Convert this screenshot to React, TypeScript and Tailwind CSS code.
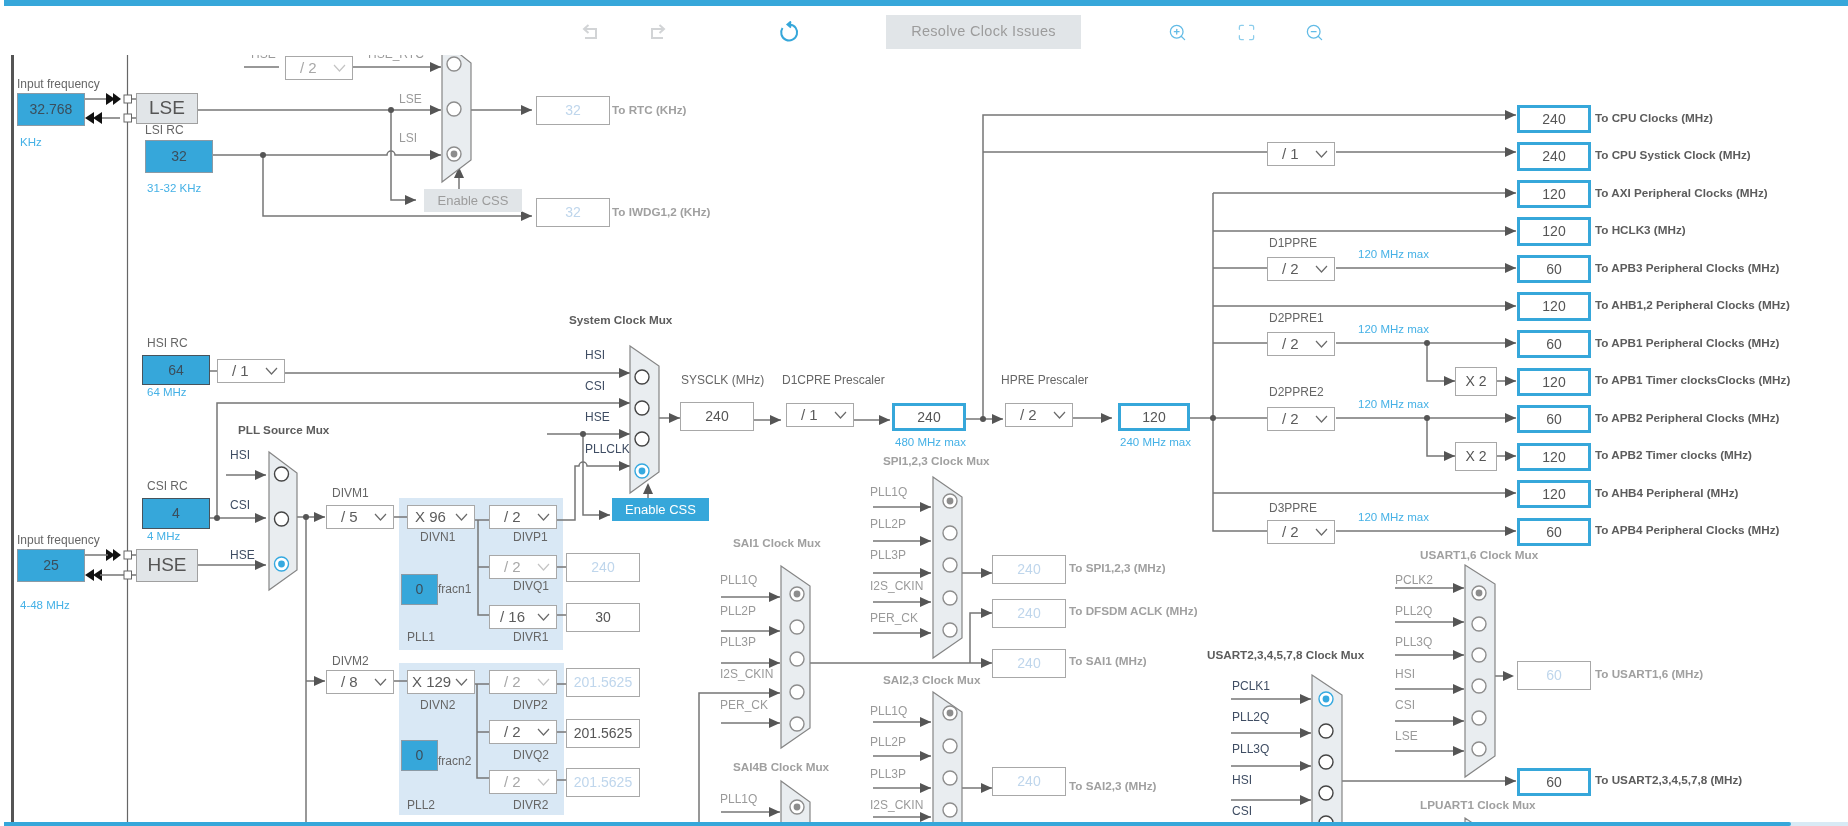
import { Maximize, ZoomIn, ZoomOut } from 'lucide-react';

// everything on the canvas uses page coordinates, the canvas itself starts at y=55
const TOP = 55;

const WIRE = '#767676';
const HEAD = '#555';

type Pt = [number, number];

const wires = [
  // LSE / LSI / RTC
  'M244 67H279', 'M353 67H441', 'M198 110H441', 'M213 155H387a4 4 0 0 1 8 0H441',
  'M391 110V200H416', 'M263 155V216H532', 'M471 110H532', 'M459 189V172',
  'M85 99H118', 'M100 118H120', 'M132 99H136', 'M132 118H136',
  // system clock mux inputs
  'M210 371H217', 'M285 373H630', 'M217 518V403H630', 'M547 434H630', 'M583 434V515H610',
  'M557 520H575V466H579a4 4 0 0 1 8 0H630', 'M648 498V486',
  // pll source mux
  'M226 475H266', 'M210 518H266', 'M198 565H266', 'M297 517H325', 'M306 517V826', 'M306 681H325',
  // pll1
  'M394 517H407', 'M475 520H489', 'M478 520V615H489', 'M478 567H489', 'M557 567H566', 'M557 615H566',
  // pll2
  'M394 681H407', 'M475 684H489', 'M477 684V778H489', 'M477 732H489', 'M557 684H566', 'M557 732H566', 'M557 780H566',
  // sysclk chain
  'M659 418H680', 'M754 420H781', 'M854 420H890', 'M966 419H1003', 'M983 419V115H1516',
  'M983 152H1267', 'M1336 152H1516', 'M1073 418H1112', 'M1190 418H1267',
  // right bus
  'M1213 193V531H1267', 'M1213 193H1516', 'M1213 231H1516', 'M1213 306H1516', 'M1213 493H1516',
  'M1213 268H1267', 'M1336 268H1516', 'M1213 343H1267', 'M1336 343H1516', 'M1336 418H1516', 'M1336 531H1516',
  'M1427 343V381H1455', 'M1497 381H1516', 'M1427 418V456H1455', 'M1497 456H1516',
  // sai1
  'M721 597H780', 'M721 631H780', 'M721 663H780', 'M721 723H780', 'M699 826V693H780', 'M721 812H780',
  'M810 663H992', 'M970 663V613H992',
  // spi / sai2,3
  'M873 507H931', 'M873 541H931', 'M873 573H931', 'M873 602H931', 'M873 633H931', 'M962 573H992',
  'M873 722H931', 'M873 756H931', 'M873 788H931', 'M873 817H931', 'M962 788H992',
  // usart
  'M1395 588H1464', 'M1395 622H1464', 'M1395 655H1464', 'M1395 689H1464', 'M1395 721H1464', 'M1395 751H1464',
  'M1495 676H1512', 'M1231 699H1311', 'M1231 733H1311', 'M1231 766H1311', 'M1231 800H1311', 'M1342 781H1516',
];

const arrows: Pt[] = [
  [441, 67], [441, 110], [441, 155], [416, 200], [532, 216], [532, 110],
  [630, 373], [630, 403], [630, 434], [630, 466], [610, 515],
  [266, 475], [266, 518], [266, 565], [325, 517], [325, 681],
  [680, 418], [781, 420], [890, 420], [1003, 419], [1112, 418],
  [1516, 115], [1516, 152], [1516, 193], [1516, 231], [1516, 268], [1516, 306], [1516, 343],
  [1516, 381], [1516, 418], [1516, 456], [1516, 493], [1516, 531], [1455, 381], [1455, 456],
  [780, 597], [780, 631], [780, 663], [780, 723], [780, 693], [780, 812], [992, 663], [992, 613],
  [931, 507], [931, 541], [931, 573], [931, 602], [931, 633], [992, 573],
  [931, 722], [931, 756], [931, 788], [931, 817], [992, 788],
  [1464, 588], [1464, 622], [1464, 655], [1464, 689], [1464, 721], [1464, 751], [1514, 676],
  [1311, 699], [1311, 733], [1311, 766], [1311, 800], [1516, 781],
];

const dots: Pt[] = [
  [391, 110], [263, 155], [583, 434], [217, 518], [306, 517], [983, 419], [1213, 418], [1427, 343], [1427, 418],
];

type Mux = { x: number; w: number; tl: number; tr: number; br: number; bl: number; cx: number; cys: number[]; on: number; active?: boolean };

const muxes: Mux[] = [
  { x: 442, w: 29, tl: 40, tr: 63, br: 160, bl: 182, cx: 454, cys: [64, 109, 154], on: 2 },
  { x: 269, w: 28, tl: 452, tr: 473, br: 570, bl: 590, cx: 281.5, cys: [474, 519, 564], on: 2, active: true },
  { x: 630, w: 29, tl: 346, tr: 366, br: 472, bl: 493, cx: 642, cys: [377, 408, 439, 471], on: 3, active: true },
  { x: 781, w: 29, tl: 566, tr: 586, br: 728, bl: 748, cx: 797, cys: [594, 627, 659, 692, 724], on: 0 },
  { x: 781, w: 29, tl: 781, tr: 802, br: 900, bl: 920, cx: 797, cys: [807], on: 0 },
  { x: 933, w: 29, tl: 477, tr: 497, br: 638, bl: 658, cx: 950, cys: [501, 533, 565, 598, 630], on: 0 },
  { x: 933, w: 29, tl: 692, tr: 712, br: 900, bl: 920, cx: 950, cys: [713, 746, 778, 810], on: 0 },
  { x: 1465, w: 30, tl: 565, tr: 584, br: 756, bl: 777, cx: 1479, cys: [593, 624, 655, 686, 718, 749], on: 0 },
  { x: 1312, w: 30, tl: 675, tr: 695, br: 900, bl: 920, cx: 1326, cys: [699, 731, 762, 793, 823], on: 0, active: true },
  { x: 1465, w: 30, tl: 818, tr: 838, br: 900, bl: 920, cx: 1479, cys: [], on: 0 },
];

const MUTED = 'text-[12px] text-[#9a9a9a]';
const PLAIN = 'text-[12px] text-[#666]';
const NAVY = 'text-[12px] text-[#3f4d63]';
const SKY = 'text-[11.5px] text-[#45b1e6]';

type Text = [string, number, number];

const plainLabels: Text[] = [
  ['Input frequency', 17, 84], ['LSI RC', 145, 130], ['HSI RC', 147, 343], ['CSI RC', 147, 486], ['Input frequency', 17, 540],
  ['DIVM1', 332, 493], ['DIVN1', 420, 537], ['DIVP1', 513, 537], ['DIVQ1', 513, 586], ['DIVR1', 513, 637], ['PLL1', 407, 637], ['fracn1', 438, 589],
  ['DIVM2', 332, 661], ['DIVN2', 420, 705], ['DIVP2', 513, 705], ['DIVQ2', 513, 755], ['DIVR2', 513, 805], ['PLL2', 407, 805], ['fracn2', 438, 761],
  ['SYSCLK (MHz)', 681, 380], ['D1CPRE Prescaler', 782, 380], ['HPRE Prescaler', 1001, 380],
  ['D1PPRE', 1269, 243], ['D2PPRE1', 1269, 318], ['D2PPRE2', 1269, 392], ['D3PPRE', 1269, 508],
];

const mutedLabels: Text[] = [
  ['HSE', 251, 54], ['HSE_RTC', 368, 54], ['LSE', 399, 99], ['LSI', 399, 138],
  ['PLL1Q', 870, 492], ['PLL2P', 870, 524], ['PLL3P', 870, 555], ['I2S_CKIN', 870, 586], ['PER_CK', 870, 618],
  ['PLL1Q', 720, 580], ['PLL2P', 720, 611], ['PLL3P', 720, 642], ['I2S_CKIN', 720, 674], ['PER_CK', 720, 705], ['PLL1Q', 720, 799],
  ['PLL1Q', 870, 711], ['PLL2P', 870, 742], ['PLL3P', 870, 774], ['I2S_CKIN', 870, 805],
  ['PCLK2', 1395, 580], ['PLL2Q', 1395, 611], ['PLL3Q', 1395, 642], ['HSI', 1395, 674], ['CSI', 1395, 705], ['LSE', 1395, 736],
];

const navyLabels: Text[] = [
  ['HSI', 585, 355], ['CSI', 585, 386], ['HSE', 585, 417], ['PLLCLK', 585, 449],
  ['HSI', 230, 455], ['CSI', 230, 505], ['HSE', 230, 555],
  ['PCLK1', 1232, 686], ['PLL2Q', 1232, 717], ['PLL3Q', 1232, 749], ['HSI', 1232, 780], ['CSI', 1232, 811],
];

const skyLabels: Text[] = [
  ['KHz', 20, 143], ['31-32 KHz', 147, 189], ['64 MHz', 147, 393], ['4 MHz', 147, 537], ['4-48 MHz', 20, 606],
  ['480 MHz max', 895, 443], ['240 MHz max', 1120, 443],
  ['120 MHz max', 1358, 255], ['120 MHz max', 1358, 330], ['120 MHz max', 1358, 405], ['120 MHz max', 1358, 518],
];

const titles: Text[] = [
  ['System Clock Mux', 569, 320], ['PLL Source Mux', 238, 430], ['USART2,3,4,5,7,8 Clock Mux', 1207, 655],
  ['To CPU Clocks (MHz)', 1595, 118], ['To CPU Systick Clock (MHz)', 1595, 155], ['To AXI Peripheral Clocks (MHz)', 1595, 193],
  ['To HCLK3 (MHz)', 1595, 230], ['To APB3 Peripheral Clocks (MHz)', 1595, 268], ['To AHB1,2 Peripheral Clocks (MHz)', 1595, 305],
  ['To APB1 Peripheral Clocks (MHz)', 1595, 343], ['To APB1 Timer clocksClocks (MHz)', 1595, 380], ['To APB2 Peripheral Clocks (MHz)', 1595, 418],
  ['To APB2 Timer clocks (MHz)', 1595, 455], ['To AHB4 Peripheral (MHz)', 1595, 493], ['To APB4 Peripheral Clocks (MHz)', 1595, 530],
  ['To USART2,3,4,5,7,8 (MHz)', 1595, 780],
];

const mutedTitles: Text[] = [
  ['To RTC (KHz)', 612, 110], ['To IWDG1,2 (KHz)', 612, 212],
  ['SPI1,2,3 Clock Mux', 883, 461], ['SAI1 Clock Mux', 733, 543], ['SAI2,3 Clock Mux', 883, 680], ['SAI4B Clock Mux', 733, 767],
  ['USART1,6 Clock Mux', 1420, 555], ['LPUART1 Clock Mux', 1420, 805],
  ['To SPI1,2,3 (MHz)', 1069, 568], ['To DFSDM ACLK (MHz)', 1069, 611], ['To SAI1 (MHz)', 1069, 661], ['To SAI2,3 (MHz)', 1069, 786],
  ['To USART1,6 (MHz)', 1595, 674],
];

type Drop = { x: number; y: number; v: string; off?: boolean; inset?: number };

const drops: Drop[] = [
  { x: 285, y: 56, v: '/ 2', off: true },
  { x: 217, y: 359, v: '/ 1' },
  { x: 326, y: 505, v: '/ 5' },
  { x: 407, y: 505, v: 'X 96', inset: 7 },
  { x: 489, y: 505, v: '/ 2' },
  { x: 489, y: 555, v: '/ 2', off: true },
  { x: 489, y: 605, v: '/ 16', inset: 10 },
  { x: 326, y: 670, v: '/ 8' },
  { x: 407, y: 670, v: 'X 129', inset: 4 },
  { x: 489, y: 670, v: '/ 2', off: true },
  { x: 489, y: 720, v: '/ 2' },
  { x: 489, y: 770, v: '/ 2', off: true },
  { x: 786, y: 403, v: '/ 1' },
  { x: 1005, y: 403, v: '/ 2' },
  { x: 1267, y: 142, v: '/ 1' },
  { x: 1267, y: 257, v: '/ 2' },
  { x: 1267, y: 332, v: '/ 2' },
  { x: 1267, y: 407, v: '/ 2' },
  { x: 1267, y: 520, v: '/ 2' },
];

type Val = [string, number, number, number, number];

// plain outlined boxes
const values: Val[] = [
  ['240', 680, 402, 74, 29], ['30', 566, 603, 74, 29], ['201.5625', 566, 719, 74, 29], ['X 2', 1455, 367, 42, 29], ['X 2', 1455, 442, 42, 29],
];
const fadedValues: Val[] = [
  ['32', 536, 96, 74, 29], ['32', 536, 198, 74, 29], ['240', 566, 553, 74, 29], ['201.5625', 566, 668, 74, 29], ['201.5625', 566, 768, 74, 29],
  ['240', 992, 555, 74, 29], ['240', 992, 599, 74, 29], ['240', 992, 649, 74, 29], ['240', 992, 767, 74, 29], ['60', 1517, 661, 74, 29],
];
const ringValues: Val[] = [
  ['240', 892, 403, 74, 28], ['120', 1118, 403, 72, 28],
  ['240', 1517, 105, 74, 28], ['240', 1517, 142, 74, 29], ['120', 1517, 180, 74, 28], ['120', 1517, 217, 74, 29], ['60', 1517, 255, 74, 28],
  ['120', 1517, 292, 74, 29], ['60', 1517, 330, 74, 28], ['120', 1517, 368, 74, 28], ['60', 1517, 405, 74, 28], ['120', 1517, 443, 74, 28],
  ['120', 1517, 480, 74, 28], ['60', 1517, 518, 74, 28], ['60', 1517, 768, 74, 28],
];
const blueValues: Val[] = [
  ['32.768', 17, 93, 68, 33], ['32', 145, 140, 68, 33], ['25', 17, 549, 68, 33], ['0', 401, 574, 37, 31], ['0', 401, 740, 37, 31],
];
const darkBlueValues: Val[] = [['64', 142, 355, 68, 30], ['4', 142, 498, 68, 31]];

function Labels({ items, className }: { items: Text[]; className: string }) {
  return (
    <>
      {items.map(([text, x, y], i) => (
        <span
          key={i}
          className={`absolute -translate-y-1/2 whitespace-nowrap leading-none ${className}`}
          style={{ left: x, top: y - TOP }}
        >
          {text}
        </span>
      ))}
    </>
  );
}

function Boxes({ items, className }: { items: Val[]; className: string }) {
  return (
    <>
      {items.map(([text, x, y, w, h], i) => (
        <div
          key={i}
          className={`absolute flex items-center justify-center ${className}`}
          style={{ left: x, top: y - TOP, width: w, height: h }}
        >
          {text}
        </div>
      ))}
    </>
  );
}

function Dropdown({ x, y, v, off, inset = 14 }: Drop) {
  return (
    <div
      className={`absolute flex h-[24px] w-[68px] items-center justify-between border border-[#a8a8a8] bg-white pr-[6px] text-[15px] ${off ? 'text-[#a8a8a8]' : 'text-[#5c5c5c]'}`}
      style={{ left: x, top: y - TOP, paddingLeft: inset }}
    >
      <span>{v}</span>
      <svg width="13" height="8" viewBox="0 0 13 8" fill="none" stroke={off ? '#c4c4c4' : '#6a6a6a'} strokeWidth="1.2">
        <path d="M1 1l5.5 6L12 1" />
      </svg>
    </div>
  );
}

function Diagram() {
  return (
    <svg className="absolute inset-0" width="1848" height="771" viewBox={`0 ${TOP} 1848 771`}>
      <path d="M12.500 55V826" stroke="#555" strokeWidth="3" />
      <path d="M127.500 55V826" stroke="#666" strokeWidth="1.2" />

      {/* pll panels sit under the wires */}
      <rect x="399" y="498" width="164" height="152" fill="#d9e8f5" />
      <rect x="399" y="663" width="165" height="152" fill="#d9e8f5" />

      {wires.map((d, i) => (
        <path key={i} d={d} fill="none" stroke={WIRE} strokeWidth="1.5" />
      ))}
      {arrows.map(([x, y], i) => (
        <polygon key={i} points={`${x - 11},${y - 5} ${x},${y} ${x - 11},${y + 5}`} fill={HEAD} />
      ))}
      <polygon points="459,167 454,178 464,178" fill={HEAD} />
      <polygon points="648,483 643,494 653,494" fill={HEAD} />
      {dots.map(([x, y], i) => (
        <circle key={i} cx={x} cy={y} r="3" fill={HEAD} />
      ))}

      {/* crystal pins */}
      <polygon points="106,93 115,99 106,105" fill="#111" />
      <polygon points="113,93 121,99 113,105" fill="#111" />
      <polygon points="94,112 85,118 94,124" fill="#111" />
      <polygon points="102,112 93,118 102,124" fill="#111" />
      <polygon points="106,549 115,555 106,561" fill="#111" />
      <polygon points="113,549 121,555 113,561" fill="#111" />
      <polygon points="94,569 85,575 94,581" fill="#111" />
      <polygon points="102,569 93,575 102,581" fill="#111" />
      <path d="M85 555H108M100 575H124M132 555H136M132 575H136" stroke={WIRE} strokeWidth="1.5" />
      {[99, 118, 555, 575].map((y) => (
        <rect key={y} x="124" y={y - 4} width="7.500" height="8" fill="#fff" stroke="#666" />
      ))}

      {muxes.map((m, i) => {
        const accent = m.active ? '#35a9e0' : '#8d8d8d';
        const ring = m.active ? '#444' : '#8d8d8d';
        return (
          <g key={i}>
            <polygon
              points={`${m.x},${m.tl} ${m.x + m.w},${m.tr} ${m.x + m.w},${m.br} ${m.x},${m.bl}`}
              fill="#e9edf0"
              stroke="#858585"
              strokeWidth="1.2"
            />
            {m.cys.map((cy, j) => (
              <g key={j}>
                <circle cx={m.cx} cy={cy} r="7" fill="#fff" stroke={j === m.on ? accent : ring} strokeWidth="1.4" />
                {j === m.on && <circle cx={m.cx} cy={cy} r="3.400" fill={accent} />}
              </g>
            ))}
          </g>
        );
      })}
    </svg>
  );
}

export default function App() {
  return (
    <div className="flex h-[826px] w-[1848px] flex-col overflow-hidden bg-white font-['Liberation_Sans',Arial,sans-serif] blur-[0.4px]">
      <div className="ml-[4px] h-[6px] shrink-0 bg-[#36a7da]" />

      {/* toolbar */}
      <div className="flex h-[49px] shrink-0 items-center pt-[3px] pl-[582px]">
        <svg width="18" height="18" viewBox="0 0 18 18" fill="none" stroke="#d2d4d6" strokeWidth="2">
          <path d="M2 6h12v9H3" />
          <path d="M6.500 2L2 6l4.500 4" />
        </svg>
        <svg className="ml-[48px]" width="18" height="18" viewBox="0 0 18 18" fill="none" stroke="#d2d4d6" strokeWidth="2">
          <path d="M16 6H4v9h11" />
          <path d="M11.500 2L16 6l-4.500 4" />
        </svg>
        <svg className="ml-[113px]" width="20" height="22" viewBox="0 0 20 22" fill="none" stroke="#36a7da" strokeWidth="2">
          <path d="M11 3.500a8 8 0 1 1-7.500 3.500" />
          <path d="M12 0.500L8.500 3.500L12 6.500" fill="#36a7da" />
        </svg>
        <button className="ml-[87px] flex h-[34px] w-[195px] items-center justify-center bg-[#e1e5e8] text-[14.5px] tracking-[0.3px] text-[#9c9c9c]">
          Resolve Clock Issues
        </button>
        <ZoomIn className="ml-[87px] text-[#62bbe6]" size={19} strokeWidth={1.6} />
        <Maximize className="ml-[50px] text-[#8ccdec]" size={19} strokeWidth={1.6} />
        <ZoomOut className="ml-[49px] text-[#62bbe6]" size={19} strokeWidth={1.6} />
      </div>

      {/* clock tree canvas */}
      <div className="relative min-h-0 flex-1 overflow-hidden">
        <Diagram />

        <Boxes items={blueValues} className="border border-[#8b9aa5] bg-[#36a7da] text-[14px] text-[#3b4e5c]" />
        <Boxes items={darkBlueValues} className="border border-[#47535c] bg-[#36a7da] text-[14px] text-[#3b4e5c]" />
        <Boxes items={values} className="border border-[#a8a8a8] bg-white text-[14px] text-[#555]" />
        <Boxes items={fadedValues} className="border border-[#a8a8a8] bg-white text-[14px] text-[#bfd6ec]" />
        <Boxes items={ringValues} className="border-[3px] border-[#36a7da] bg-white text-[14px] text-[#555]" />

        {drops.map((d, i) => (
          <Dropdown key={i} {...d} />
        ))}

        <Boxes items={[['LSE', 136, 93, 62, 31], ['HSE', 136, 549, 62, 33]]} className="border border-[#a0a0a0] bg-[#e1e5e8] text-[19px] text-[#555]" />
        <Boxes items={[['Enable CSS', 424, 189, 98, 23]]} className="bg-[#e1e5e8] text-[13px] text-[#9c9c9c]" />
        <Boxes items={[['Enable CSS', 612, 498, 97, 23]]} className="bg-[#36a7da] text-[13px] text-white" />

        <Labels items={plainLabels} className={PLAIN} />
        <Labels items={mutedLabels} className={MUTED} />
        <Labels items={navyLabels} className={NAVY} />
        <Labels items={skyLabels} className={SKY} />
        <Labels items={titles} className="text-[11.7px] font-bold text-[#5c5c5c]" />
        <Labels items={mutedTitles} className="text-[11.7px] font-bold text-[#a0a0a0]" />
      </div>

      {/* horizontal scrollbar */}
      <div className="ml-[4px] h-[4px] shrink-0 bg-[#d8eaf5]">
        <div className="h-full w-[1787px] rounded-r-full bg-[#36a7da]" />
      </div>
    </div>
  );
}
